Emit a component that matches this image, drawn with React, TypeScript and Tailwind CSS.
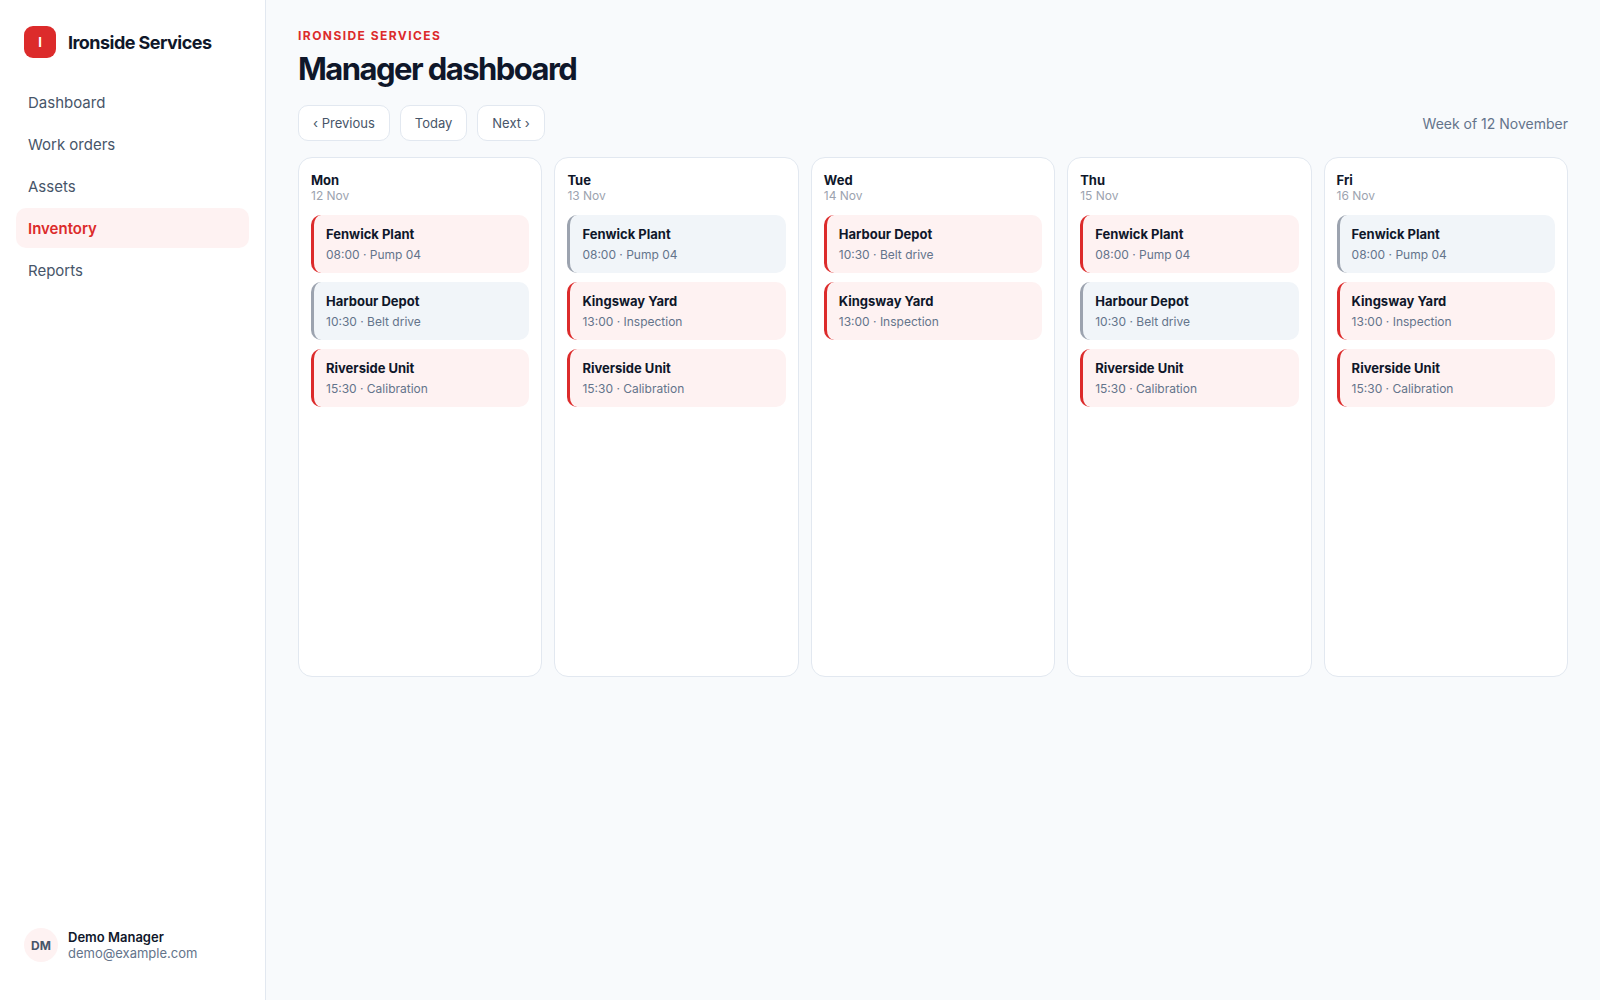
import clsx from "clsx";

type Visit = {
  site: string;
  detail: string;
  muted?: boolean;
};

type Day = {
  name: string;
  date: string;
  visits: Visit[];
};

const navItems = ["Dashboard", "Work orders", "Assets", "Inventory", "Reports"];

const fenwick = { site: "Fenwick Plant", detail: "08:00 · Pump 04" };
const harbour = { site: "Harbour Depot", detail: "10:30 · Belt drive" };
const kingsway = { site: "Kingsway Yard", detail: "13:00 · Inspection" };
const riverside = { site: "Riverside Unit", detail: "15:30 · Calibration" };

const days: Day[] = [
  {
    name: "Mon",
    date: "12 Nov",
    visits: [fenwick, { ...harbour, muted: true }, riverside],
  },
  {
    name: "Tue",
    date: "13 Nov",
    visits: [{ ...fenwick, muted: true }, kingsway, riverside],
  },
  { name: "Wed", date: "14 Nov", visits: [harbour, kingsway] },
  {
    name: "Thu",
    date: "15 Nov",
    visits: [fenwick, { ...harbour, muted: true }, riverside],
  },
  {
    name: "Fri",
    date: "16 Nov",
    visits: [{ ...fenwick, muted: true }, kingsway, riverside],
  },
];

function Sidebar({ active }: { active: string }) {
  return (
    <aside className="flex w-[266px] shrink-0 flex-col border-r border-[#e2e8f0] bg-white px-4 pt-[26px] pb-[38px]">
      <div className="flex items-center gap-3 px-2">
        <div className="flex h-8 w-8 items-center justify-center rounded-[9px] bg-[#dc2b2b] pt-[2px] text-[13px] font-bold text-white">
          I
        </div>
        <span className="pt-[2px] text-lg font-bold tracking-[-0.03em]">
          Ironside Services
        </span>
      </div>

      <nav className="mt-6 flex flex-col gap-[2px]">
        {navItems.map((item) => (
          <a
            key={item}
            href="#"
            className={clsx(
              "rounded-[10px] px-3 pt-[9px] pb-[7px] text-[15px] leading-6",
              item === active
                ? "bg-[#fef2f2] font-semibold text-[#dc2b2b]"
                : "text-[#475569]"
            )}
          >
            {item}
          </a>
        ))}
      </nav>

      <div className="mt-auto flex items-center gap-[10px] px-2">
        <div className="flex h-[34px] w-[34px] items-center justify-center rounded-full bg-[#fef2f2] pt-[2px] text-xs font-bold text-[#475569]">
          DM
        </div>
        <div className="text-[13px] leading-4">
          <div className="font-semibold">Demo Manager</div>
          <div className="text-[#64748b]">demo@example.com</div>
        </div>
      </div>
    </aside>
  );
}

function WeekButton({ label }: { label: string }) {
  return (
    <button
      type="button"
      className="rounded-[10px] border border-[#e2e8f0] bg-white px-[14px] py-2 text-[13px] leading-[18px] text-[#475569]"
    >
      {label}
    </button>
  );
}

function VisitCard({ site, detail, muted }: Visit) {
  return (
    <div
      className={clsx(
        "rounded-[10px] border-l-[3px] px-3 py-[9px]",
        muted ? "border-[#9ca3af] bg-[#f1f5f9]" : "border-[#dc2b2b] bg-[#fef2f2]"
      )}
    >
      <div className="text-[13px] leading-5 font-bold">{site}</div>
      <div className="mt-[2px] text-xs leading-[18px] text-[#64748b]">
        {detail}
      </div>
    </div>
  );
}

function DayColumn({ name, date, visits }: Day) {
  return (
    <section className="min-h-[520px] rounded-[14px] border border-[#e2e8f0] bg-white px-3 py-[14px]">
      <h2 className="text-[13px] leading-4 font-bold">{name}</h2>
      <p className="text-xs leading-4 text-[#9ca3af]">{date}</p>
      <div className="mt-[11px] flex flex-col gap-[9px]">
        {visits.map((visit) => (
          <VisitCard key={visit.site} {...visit} />
        ))}
      </div>
    </section>
  );
}

export default function App() {
  return (
    <div className="flex min-h-screen bg-[#f8fafc] font-[Inter,sans-serif] text-[#0f172a]">
      <Sidebar active="Inventory" />

      <main className="min-w-0 flex-1 px-8 py-7">
        <p className="text-xs leading-4 font-bold tracking-[0.12em] text-[#dc2b2b] uppercase">
          Ironside Services
        </p>
        <h1 className="mt-[5px] text-[31px] leading-10 font-bold tracking-tighter">
          Manager dashboard
        </h1>

        <div className="mt-4 flex items-center justify-between">
          <div className="flex gap-[10px]">
            <WeekButton label="‹ Previous" />
            <WeekButton label="Today" />
            <WeekButton label="Next ›" />
          </div>
          <span className="pt-[2px] text-sm text-[#64748b]">
            Week of 12 November
          </span>
        </div>

        <div className="mt-4 grid grid-cols-5 gap-3">
          {days.map((day) => (
            <DayColumn key={day.name} {...day} />
          ))}
        </div>
      </main>
    </div>
  );
}
